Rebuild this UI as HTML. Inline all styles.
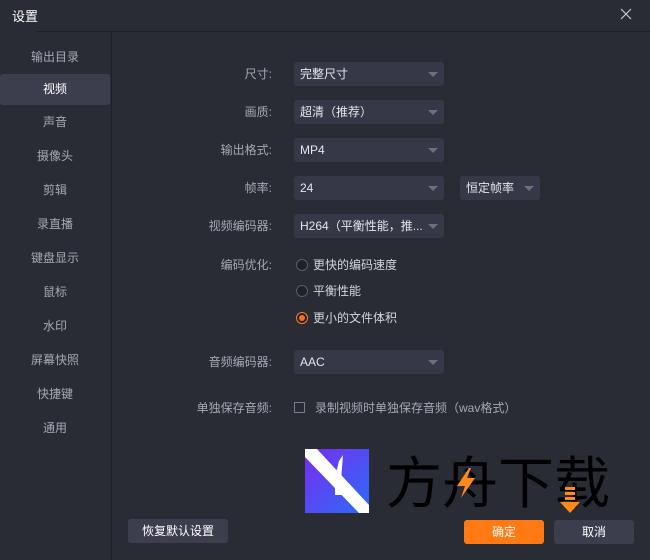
<!DOCTYPE html>
<html><head><meta charset="utf-8"><style>
*{margin:0;padding:0;box-sizing:border-box}
body{width:650px;height:560px;background:#292b35;font-family:"Liberation Sans","Noto Sans CJK SC",sans-serif;font-size:12px;color:#c8cad2;position:relative;overflow:hidden}
.a{position:absolute}
.title{left:12px;top:6px;color:#fff;font-size:13px}
.hline{left:36px;top:31px;width:614px;height:1px;background:#1e2028}
.vline{left:111px;top:32px;width:1px;height:528px;background:#1e2028}
.side{left:0;width:110px;text-align:center;color:#a6a8b2;height:20px;line-height:20px}
.act{left:0;top:74px;width:110px;height:31px;background:#3c3e4e;border-radius:3px}
.lbl{width:272px;left:0;text-align:right;color:#a6a8b2;height:20px;line-height:20px}
.sel{left:294px;width:150px;height:24px;background:#363847;border-radius:3px;color:#e4e6ec;line-height:24px;padding-left:6px}
.sel:after{content:"";position:absolute;right:6px;top:10px;border-left:5px solid transparent;border-right:5px solid transparent;border-top:5px solid #6d6f7c}
.rad{left:296px;width:12px;height:12px;border:1px solid #5a5c68;border-radius:50%;background:#1f2128}
.rt{left:313px;color:#d4d6dc;line-height:20px}
.btn{height:24px;line-height:24px;text-align:center;border-radius:3px;color:#fff}
</style></head><body>
<div class="a title">设置</div>
<svg class="a" style="left:620px;top:8px" width="12" height="12" viewBox="0 0 12 12"><path d="M1 1L11 11M11 1L1 11" stroke="#c8cad2" stroke-width="1.2"/></svg>
<div class="a hline"></div><div class="a vline"></div>
<div class="a act"></div>
<div class="a side" style="top:47px">输出目录</div>
<div class="a side" style="top:79px;color:#fff">视频</div>
<div class="a side" style="top:112px">声音</div>
<div class="a side" style="top:146px">摄像头</div>
<div class="a side" style="top:180px">剪辑</div>
<div class="a side" style="top:214px">录直播</div>
<div class="a side" style="top:248px">键盘显示</div>
<div class="a side" style="top:282px">鼠标</div>
<div class="a side" style="top:316px">水印</div>
<div class="a side" style="top:350px">屏幕快照</div>
<div class="a side" style="top:384px">快捷键</div>
<div class="a side" style="top:418px">通用</div>

<div class="a lbl" style="top:64px">尺寸:</div><div class="a sel" style="top:62px">完整尺寸</div>
<div class="a lbl" style="top:102px">画质:</div><div class="a sel" style="top:100px">超清（推荐）</div>
<div class="a lbl" style="top:140px">输出格式:</div><div class="a sel" style="top:138px">MP4</div>
<div class="a lbl" style="top:178px">帧率:</div><div class="a sel" style="top:176px">24</div>
<div class="a sel" style="top:176px;left:460px;width:80px">恒定帧率</div>
<div class="a lbl" style="top:216px">视频编码器:</div><div class="a sel" style="top:214px">H264（平衡性能，推...</div>
<div class="a lbl" style="top:255px">编码优化:</div>
<div class="a rad" style="top:259px"></div><div class="a rt" style="top:255px">更快的编码速度</div>
<div class="a rad" style="top:285px"></div><div class="a rt" style="top:281px">平衡性能</div>
<div class="a rad" style="top:312px;border:1px solid #ff7a2a;background:#1f2128"><div style="position:absolute;left:2px;top:2px;width:6px;height:6px;border-radius:50%;background:#ff6a1a"></div></div><div class="a rt" style="top:308px">更小的文件体积</div>
<div class="a lbl" style="top:352px">音频编码器:</div><div class="a sel" style="top:350px">AAC</div>
<div class="a lbl" style="top:398px">单独保存音频:</div>
<div class="a" style="left:294px;top:402px;width:11px;height:11px;border:1px solid #7a7c88"></div>
<div class="a rt" style="top:398px;left:315px;color:#a6a8b2">录制视频时单独保存音频（wav格式）</div>

<svg class="a" style="left:305px;top:449px" width="64" height="64" viewBox="0 0 64 64">
<defs><linearGradient id="g" x1="0" y1="0" x2="1" y2="1"><stop offset="0" stop-color="#7a2cf0"/><stop offset="1" stop-color="#2a6cf8"/></linearGradient></defs>
<rect width="64" height="64" fill="url(#g)"/>
<polygon points="0,0 12,0 64,56 64,64 54,64 0,8" fill="#fff"/>
<polygon points="34,12 38,6 36,32 30,28" fill="#fff"/>
<polygon points="30,38 34,34 40,46 30,46" fill="#fff"/>
</svg>
<div class="a" style="left:386px;top:448px;font-size:56px;line-height:64px;color:#000;font-family:'Noto Sans CJK SC',sans-serif">方舟下载</div>
<svg class="a" style="left:455px;top:468px" width="22" height="30" viewBox="0 0 22 30"><polygon points="14,0 2,18 10,18 6,30 20,10 12,10 16,0" fill="#ff8a1a"/></svg>
<svg class="a" style="left:560px;top:487px" width="20" height="26" viewBox="0 0 20 26"><g fill="#ff8a1a"><rect x="5" y="0" width="10" height="3"/><rect x="5" y="5" width="10" height="3"/><rect x="5" y="10" width="10" height="3"/><polygon points="0,15 20,15 10,26"/></g></svg>

<div class="a btn" style="left:128px;top:519px;width:100px;background:#3c3e4e">恢复默认设置</div>
<div class="a btn" style="left:464px;top:520px;width:80px;background:#ff7a12">确定</div>
<div class="a btn" style="left:554px;top:520px;width:80px;background:#3c3e4e">取消</div>
</body></html>
